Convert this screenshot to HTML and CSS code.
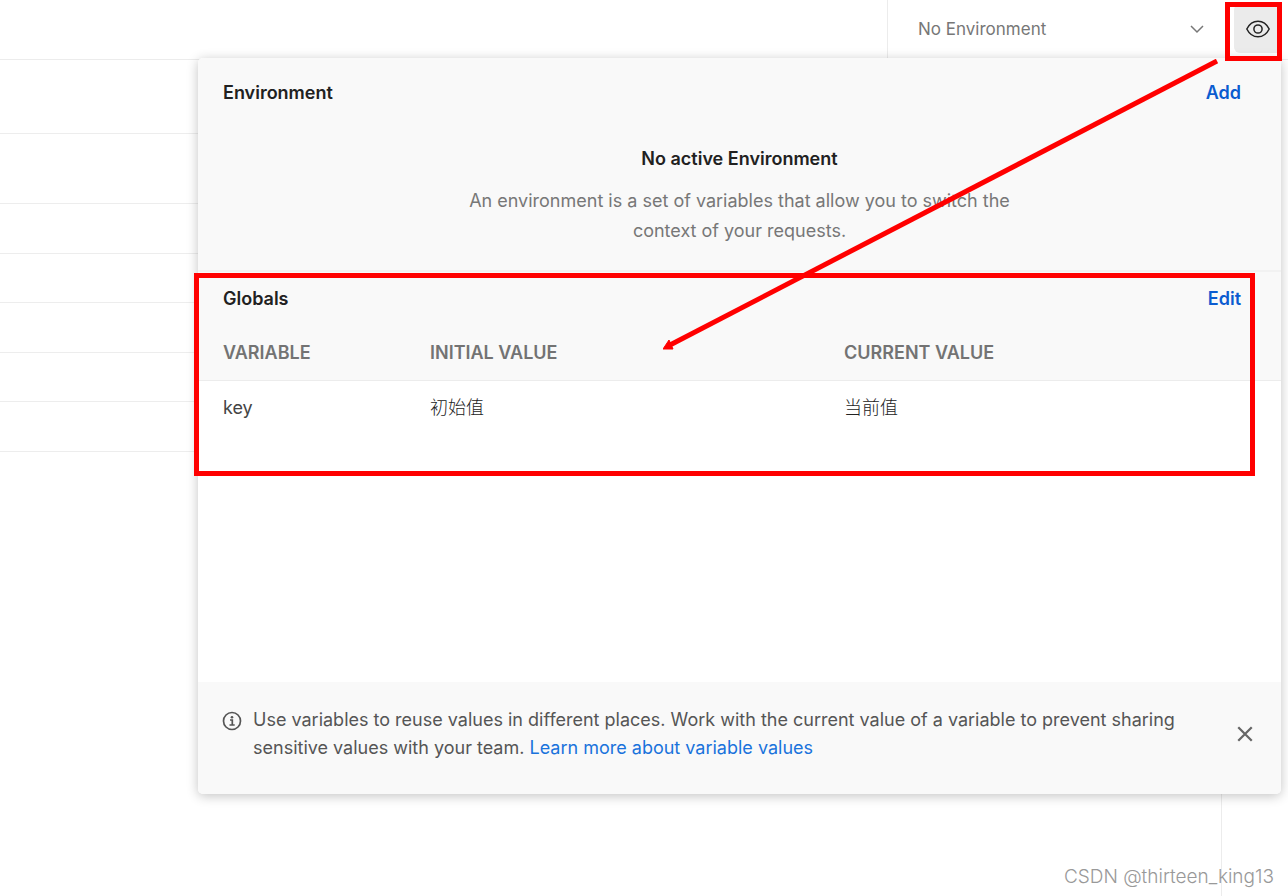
FILE: index.html
```html
<!DOCTYPE html>
<html lang="en">
<head>
<meta charset="utf-8">
<title>Environment quick look</title>
<link rel="stylesheet" href="styles.css">
</head>
<body>
<div class="page">
  <header class="topbar">
    <div class="env-picker">
      <button class="env-select" type="button">
        <span>No Environment</span>
        <svg class="chevron" viewBox="0 0 14 10" aria-hidden="true"><path d="M1 2l6 6 6-6"/></svg>
      </button>
    </div>
    <div class="eye-slot">
      <button class="eye-button" type="button" aria-label="Environment quick look">
        <svg class="eye-icon" viewBox="0 0 24 18" aria-hidden="true"><path d="M.8 9C3.2 4.2 7.2 1.200 12 1.200S20.800 4.200 23.200 9C20.800 13.800 16.800 16.800 12 16.800S3.200 13.800.8 9z"/><circle cx="12" cy="9" r="4.100"/></svg>
      </button>
      <span class="mark mark-eye"></span>
    </div>
  </header>

  <main class="workspace">
    <div class="rows">
      <div class="row row-first"></div>
      <div class="row row-tall"></div>
      <div class="row"></div>
      <div class="row"></div>
      <div class="row"></div>
      <div class="row"></div>
      <div class="row"></div>
    </div>
    <aside class="rail"></aside>
  </main>

  <section class="popover">
    <div class="environment">
      <div class="section-head">
        <h2>Environment</h2>
        <button class="action" type="button">Add</button>
      </div>
      <div class="empty">
        <h3>No active Environment</h3>
        <p>An environment is a set of variables that allow you to switch the context of your requests.</p>
      </div>
    </div>

    <div class="globals">
      <div class="section-head globals-head">
        <h2>Globals</h2>
        <button class="action" type="button">Edit</button>
      </div>
      <table class="variables">
        <colgroup><col class="col-name"><col class="col-initial"><col></colgroup>
        <thead><tr><th>VARIABLE</th><th>INITIAL VALUE</th><th>CURRENT VALUE</th></tr></thead>
        <tbody><tr><td>key</td><td lang="zh">初始值</td><td lang="zh">当前值</td></tr></tbody>
      </table>
      <span class="mark mark-globals"></span>
    </div>

    <footer class="tip">
      <svg class="info-icon" viewBox="0 0 20 20" aria-hidden="true"><circle cx="10" cy="10" r="8.500"/><path d="M8 9h2.300v5M7.500 14h5.200"/><circle class="dot" cx="10" cy="6.200" r="1.300"/></svg>
      <p>Use variables to reuse values in different places. Work with the current value of a variable to prevent sharing sensitive values with your team. <a href="#">Learn more about variable values</a></p>
      <button class="close" type="button" aria-label="Close">
        <svg viewBox="0 0 16 16" aria-hidden="true"><path d="M2 2l12 12M14 2L2 14"/></svg>
      </button>
    </footer>
  </section>

  <svg class="arrow" viewBox="0 0 556 292" aria-hidden="true">
    <path class="arrow-line" d="M554 2L7 286"/>
    <path class="arrow-tip" d="M0 290L6 281L10 290z"/>
  </svg>
  <div class="credit">CSDN @thirteen_king13</div>
</div>
</body>
</html>
```

FILE: styles.css
```css
* { box-sizing: border-box; }

body {
  margin: 0;
  background: #fff;
  color: #212121;
  font: 18px/28px Inter, "Noto Sans CJK SC", sans-serif;
}

h2, h3, p { margin: 0; }
h2, h3 { font-size: 18px; font-weight: 600; }

button {
  padding: 0;
  border: 0;
  background: none;
  color: inherit;
  font: inherit;
  cursor: pointer;
}

svg { display: block; fill: none; stroke: currentColor; }

.page {
  position: relative;
  display: flex;
  flex-direction: column;
  min-height: 100vh;
}

/* Top bar */
.topbar {
  display: flex;
  justify-content: flex-end;
  height: 60px;
  border-bottom: 1px solid #ececec;
}

.env-picker {
  width: 338px;
  border-left: 1px solid #ececec;
}

.env-select {
  display: flex;
  align-items: center;
  justify-content: space-between;
  width: 100%;
  height: 58px;
  padding: 0 21px 0 30px;
  color: #777;
  font-size: 17px;
}

.chevron { width: 14px; height: 10px; stroke-width: 1.5; }

.eye-slot {
  position: relative;
  width: 63px;
  padding: 4px 6px 0 9px;
}

.eye-button {
  display: grid;
  place-items: center;
  width: 48px;
  height: 49px;
  border-radius: 6px;
  background: #ebebeb;
}

.eye-icon { width: 24px; height: 18px; stroke: #222; stroke-width: 1.5; }

/* Background list */
.workspace { display: flex; flex: 1; }
.rows { flex: 1; }
.row { height: 50px; border-bottom: 1px solid #ededed; }
.row:nth-child(even) { height: 49px; }
.row.row-first { height: 74px; }
.row.row-tall { height: 70px; }
.rail { width: 67px; border-left: 1px solid #ececec; }

/* Popover */
.popover {
  position: absolute;
  top: 58px;
  left: 198px;
  right: 7px;
  border-radius: 5px;
  background: #fff;
  box-shadow: 0 2px 12px rgba(0, 0, 0, .24);
}

.environment {
  padding: 21px 0 24px;
  border-bottom: 2px solid #f2f2f2;
  border-radius: 5px 5px 0 0;
  background: #f9f9f9;
}

.section-head {
  display: flex;
  justify-content: space-between;
  padding: 0 40px 0 25px;
}

.action { color: #0b5cd0; font-weight: 600; }

.empty {
  display: flex;
  flex-direction: column;
  align-items: center;
  gap: 13px;
  padding-top: 38px;
  text-align: center;
}

.empty p { max-width: 560px; color: #777; line-height: 30px; }

.globals { position: relative; min-height: 410px; }
.globals-head { padding-top: 13px; background: #f9f9f9; }

.variables {
  width: 100%;
  border-collapse: separate;
  border-spacing: 0;
  table-layout: fixed;
  text-align: left;
}

.col-name { width: 232px; }
.col-initial { width: 414px; }

.variables th {
  padding: 26px 0 13px;
  border-bottom: 1px solid #ececec;
  background: #f9f9f9;
  color: #737373;
  font-weight: 600;
}

.variables td { padding: 13px 0; color: #444; }
.variables td:lang(zh) { font-weight: 300; color: #222; }
.variables th:first-child, .variables td:first-child { padding-left: 25px; }

.tip {
  display: flex;
  gap: 11px;
  padding: 24px 27px 32px 24px;
  border-radius: 0 0 5px 5px;
  background: #f9f9f9;
  color: #555;
}

.tip p { flex: 1; max-width: 940px; }
.tip a { color: #1a73dc; text-decoration: none; }
.info-icon { width: 20px; height: 20px; margin-top: 5px; stroke-width: 1.7; }
.dot { fill: currentColor; stroke: none; }
.close { align-self: center; margin-left: auto; padding: 0; }
.close svg { width: 18px; height: 18px; stroke: #666; stroke-width: 2; }

/* Annotations */
.mark { position: absolute; border: 5px solid #f00; pointer-events: none; }
.mark-eye { z-index: 1; top: 2px; left: 0; width: 57px; height: 59px; }
.mark-globals { top: 1px; left: -4px; right: 26px; height: 203px; }

.arrow {
  position: absolute;
  top: 59px;
  right: 69px;
  width: 556px;
  height: 292px;
  pointer-events: none;
}

.arrow-line { stroke: #f00; stroke-width: 5; }
.arrow-tip { fill: #f00; stroke: #f00; }

.credit {
  position: absolute;
  right: 14px;
  bottom: 5px;
  color: #999;
  font: 300 19px/28px Inter, sans-serif;
}
```
